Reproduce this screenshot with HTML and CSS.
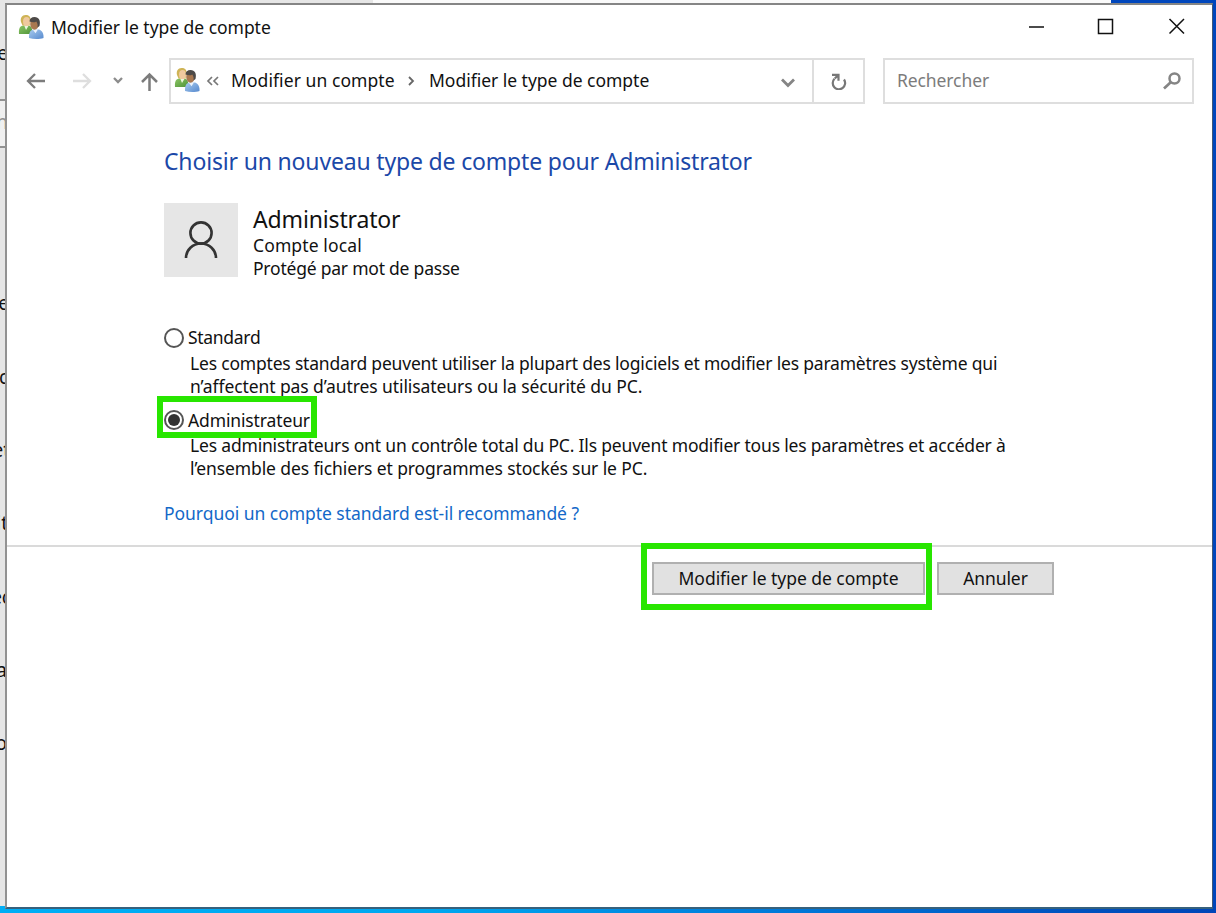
FILE: index.html
```
<!DOCTYPE html>
<html lang="fr">
<head>
<meta charset="utf-8">
<title>Modifier le type de compte</title>
<link rel="stylesheet" href="styles.css">
</head>
<body>
<div class="desktop">
  <div class="back-top"></div>
  <div class="back-panel">
    <span class="bit b1">ue</span>
    <div class="back-search"></div><span class="bit b2">h</span>
    <span class="bit b3">e</span>
    <span class="bit b4">c</span>
    <span class="bit b5">et</span>
    <span class="bit b6">it</span>
    <span class="bit b7">ec</span>
    <span class="bit b8">a</span>
    <span class="bit b9">o</span>
  </div>
  <div class="window">
    <header class="titlebar">
      <svg class="users" viewBox="0 0 26 26">
        <defs>
          <linearGradient id="green" x1="0" y1="0" x2="1" y2="1"><stop offset="0" stop-color="#8cc665"/><stop offset="1" stop-color="#4e9238"/></linearGradient>
          <linearGradient id="blue" x1="0" y1="0" x2="1" y2="1"><stop offset="0" stop-color="#a9ccef"/><stop offset="1" stop-color="#5689ce"/></linearGradient>
          <g id="people">
            <path d="M1 20c-.4-5 .5-8 4.500-8.500h5c3 .5 4 3 4 8.500z" fill="url(#green)"/>
            <path d="M6 11l2 5 3-5z" fill="#eef5df"/>
            <path d="M3 8C2 4 4 1.200 7.500 1c4-.2 5.500 2.500 5 6.500l-1 4h-7z" fill="#cfb456"/>
            <ellipse cx="8.500" cy="7.500" rx="3.500" ry="4.600" fill="#efc99f"/>
            <path d="M11 24c-.3-5 1-8 5-8.500h4.500c3.500.5 5.300 4 5 8.500-4 1.300-10 1.300-14.500 0z" fill="url(#blue)"/>
            <path d="M14.500 15.200l3 4 2.500-4z" fill="#edf3fb"/>
            <ellipse cx="16.500" cy="10" rx="4.300" ry="5.800" fill="#a97850"/>
            <path d="M11.500 7.500c0-3 2-4.500 5-4.500 4.500 0 6.300 3.500 5 9l-2 1.500c.5-3-.2-4.500-1.200-6-2 1.200-4.300 1-6.800 0z" fill="#4d4a48"/>
          </g>
        </defs>
        <use href="#people"/>
      </svg>
      <span class="text title">Modifier le type de compte</span>
      <svg class="controls" viewBox="0 0 160 24" fill="none" stroke="#111" stroke-width="1.500">
        <path d="M1 12h15M70.500 4.500h14v14h-14zM141.500 4l14.500 14.500M156 4l-14.500 14.500"/>
      </svg>
    </header>
    <nav class="navbar">
      <svg class="arrows" viewBox="0 0 140 24" fill="none" stroke-width="2.300">
        <path d="M21 12H4M11 5l-7 7 7 7" stroke="#7c7c7c"/>
        <path d="M49 12h17M59 5l7 7-7 7" stroke="#dedede"/>
        <path d="M90 9l4 4 4-4" stroke="#8c8c8c"/>
        <path d="M125.500 22V6M118 13l7.500-7.500 7.500 7.500" stroke="#7c7c7c" stroke-width="2.500"/>
      </svg>
      <div class="address">
        <svg class="users" viewBox="0 0 26 26"><use href="#people"/></svg>
        <svg class="crumb-back" viewBox="0 0 14 10" fill="none" stroke="#777" stroke-width="1.700"><path d="M6 1L2 5l4 4M12 1L8 5l4 4"/></svg>
        <span class="text crumb-one">Modifier un compte</span>
        <svg class="crumb-sep" viewBox="0 0 8 10" fill="none" stroke="#666" stroke-width="1.800"><path d="M2 1l4 4-4 4"/></svg>
        <span class="text crumb-two">Modifier le type de compte</span>
        <svg class="drop" viewBox="0 0 14 10" fill="none" stroke="#858585" stroke-width="2.800"><path d="M1 1.500l6 6 6-6"/></svg>
        <div class="refresh"><svg viewBox="0 0 18 18" fill="none" stroke="#777" stroke-width="2.200"><path d="M2 2.800h6.500v6M7.500 3.800L4.800 6.500M14 7.500A6.200 6.200 0 1 1 4.500 6.700"/></svg></div>
      </div>
      <div class="search"><span class="text placeholder">Rechercher</span>
        <svg viewBox="0 0 20 20" fill="none" stroke="#858585" stroke-width="2.500"><circle cx="12.500" cy="7.500" r="5"/><path d="M9 11l-7 6.500" stroke-width="2.700"/></svg>
      </div>
    </nav>
    <main class="content">
      <h1 class="heading"><span>Choisir un nouveau type de compte pour Administrator</span></h1>
      <section class="account">
        <div class="avatar"><svg viewBox="0 0 36 40" fill="none" stroke="#333" stroke-width="2.600"><circle cx="18" cy="13" r="10.600"/><path d="M3 38a15 14.500 0 0 1 30 0"/></svg></div>
        <div class="details">
          <span class="name">Administrator</span>
          <span class="text local">Compte local</span>
          <span class="text protected">Protégé par mot de passe</span>
        </div>
      </section>
      <div class="choices">
        <div class="option"><span class="radio"></span><span class="text standard">Standard</span></div>
        <p class="description"><span class="text d1">Les comptes standard peuvent utiliser la plupart des logiciels et modifier les paramètres système qui</span><br><span class="text d2">n’affectent pas d’autres utilisateurs ou la sécurité du PC.</span></p>
        <div class="option second"><span class="radio checked"></span><span class="text admin">Administrateur</span><div class="mark mark-option"></div></div>
        <p class="description"><span class="text d3">Les administrateurs ont un contrôle total du PC. Ils peuvent modifier tous les paramètres et accéder à</span><br><span class="text d4">l’ensemble des fichiers et programmes stockés sur le PC.</span></p>
      </div>
      <a class="text link">Pourquoi un compte standard est-il recommandé ?</a>
    </main>
    <footer class="footer">
      <div class="button primary"><span class="text btn-one">Modifier le type de compte</span><div class="mark mark-button"></div></div>
      <div class="button cancel"><span class="text btn-two">Annuler</span></div>
    </footer>
  </div>
</div>
</body>
</html>
```
FILE: styles.css
```
* { box-sizing: border-box; }
body { margin: 0; font-family: "Noto Sans", "Open Sans", sans-serif; color: #111; }
svg { display: block; flex: none; }
.desktop { position: relative; width: 1216px; height: 913px; overflow: hidden; background: linear-gradient(90deg, #00aef5 0, #00a8f0 35%, #0078d8 65%, #0050bd 90%, #0046b8 100%); }
.desktop::before { content: ""; position: absolute; right: 0; top: 0; width: 106px; height: 905px; background: #0046bc; }
.back-top { position: absolute; left: 0; top: 0; width: 1111px; height: 20px; background: linear-gradient(90deg, #e6e6e6 373px, #fafafa 373px); }
.back-panel { position: absolute; left: 0; top: 0; width: 7px; height: 906px; background: #e6e6e6; overflow: hidden; }
.back-search { position: absolute; left: -5px; top: 99px; width: 20px; height: 49px; border: 2px solid #929292; background: #f0f0f0; }
.bit { position: absolute; right: -1px; font-size: 19px; line-height: 24px; }
.b1 { top: 41px; right: -1px; } .b2 { top: 110px; color: #929292; }
.b3 { top: 291px; right: -2px; } .b4 { top: 365px; right: -1px; } .b5 { top: 438px; right: -3px; } .b6 { top: 511px; }
.b7 { top: 585px; right: -4px; } .b8 { top: 658px; right: 0; } .b9 { top: 731px; right: 0; }
.window { position: absolute; left: 5px; top: 3px; width: 1208px; height: 906px; display: flex; flex-direction: column; background: #fff; border: solid; border-width: 2px 1px 2px 2px; border-color: #858585 #405878 #36617d #929292; }
.text { font-size: 17.500px; line-height: 23px; white-space: nowrap; letter-spacing: -.3px; }
.titlebar { display: flex; align-items: center; height: 44px; padding: 0 24px 0 11px; }
.users { width: 26px; height: 26px; }
.title { margin-left: 7px; letter-spacing: -.04px; }
.controls { width: 160px; height: 24px; margin-left: auto; }
.navbar { display: flex; align-items: center; height: 64px; padding-left: 17px; }
.arrows { width: 140px; height: 24px; margin-right: 5px; }
.address { display: flex; align-items: center; width: 696px; height: 46px; padding-left: 4px; border: 2px solid #dedede; }
.address .users { margin: -3px 1px 0 -1px; }
.crumb-back { width: 14px; height: 10px; margin: 0 11px 0 5px; }
.crumb-one { width: 164px; letter-spacing: .07px; }
.crumb-sep { width: 8px; height: 10px; margin: 0 14px 0 12px; }
.crumb-two { letter-spacing: -.02px; }
.crumb-one, .crumb-two, .placeholder, .standard { margin-top: -2px; }
.drop { width: 14px; height: 10px; margin: 4px 17px 0 auto; }
.refresh { display: flex; align-items: center; justify-content: center; width: 51px; height: 42px; border-left: 2px solid #dedede; }
.refresh svg { width: 18px; height: 18px; }
.search { display: flex; align-items: center; justify-content: space-between; width: 311px; height: 46px; margin-left: 18px; padding: 0 10px 0 12px; border: 2px solid #dedede; }
.search svg { width: 20px; height: 20px; }
.placeholder { color: #7c7c7c; letter-spacing: -.1px; }
.content { height: 432px; padding: 32px 0 0 157px; }
.heading { margin: 0; font-size: 23px; line-height: 32px; font-weight: 400; letter-spacing: -.17px; color: #1b48a8; white-space: nowrap; }
.account { display: flex; margin-top: 26px; height: 74px; }
.avatar { display: flex; align-items: center; justify-content: center; width: 74px; height: 74px; background: #e6e6e6; }
.avatar svg { width: 36px; height: 40px; }
.details { display: flex; flex-direction: column; align-items: flex-start; margin-left: 15px; }
.name { font-size: 23px; line-height: 31px; letter-spacing: -.15px; padding-top: 1px; margin-bottom: -1px; white-space: nowrap; }
.local { letter-spacing: .12px; }
.protected { letter-spacing: -.22px; }
.d1 { letter-spacing: -.19px; }
.d2 { letter-spacing: -.09px; }
.d3 { letter-spacing: -.18px; }
.d4 { letter-spacing: -.11px; }
.admin { letter-spacing: -.13px; }
.btn-one { letter-spacing: -.03px; }
.btn-two { letter-spacing: -.1px; }
.choices { margin-top: 48px; }
.option { position: relative; display: flex; align-items: center; height: 26px; }
.radio { display: flex; align-items: center; justify-content: center; width: 20px; height: 20px; margin-right: 4px; border: 2px solid #555; border-radius: 50%; }
.checked::after { content: ""; width: 12px; height: 12px; border-radius: 50%; background: #333; }
.description { margin: 1px 0 0 26px; font-size: 17.500px; line-height: 23px; height: 46px; }
.second { margin-top: 9px; }
.mark { position: absolute; border: 6px solid #28e600; }
.mark-option { left: -7px; top: -11px; width: 160px; height: 42px; }
.link { display: inline-block; margin-top: 22px; color: #1368c8; letter-spacing: -.04px; }
.footer { display: flex; justify-content: flex-end; gap: 12px; padding: 15px 158px 0 0; border-top: 2px solid #dadada; }
.button { position: relative; display: flex; align-items: center; justify-content: center; height: 33px; border: 2px solid #b0b0b0; background: #e1e1e1; }
.primary { width: 273px; }
.cancel { width: 117px; }
.mark-button { left: -13px; top: -21px; width: 291px; height: 67px; }
```
